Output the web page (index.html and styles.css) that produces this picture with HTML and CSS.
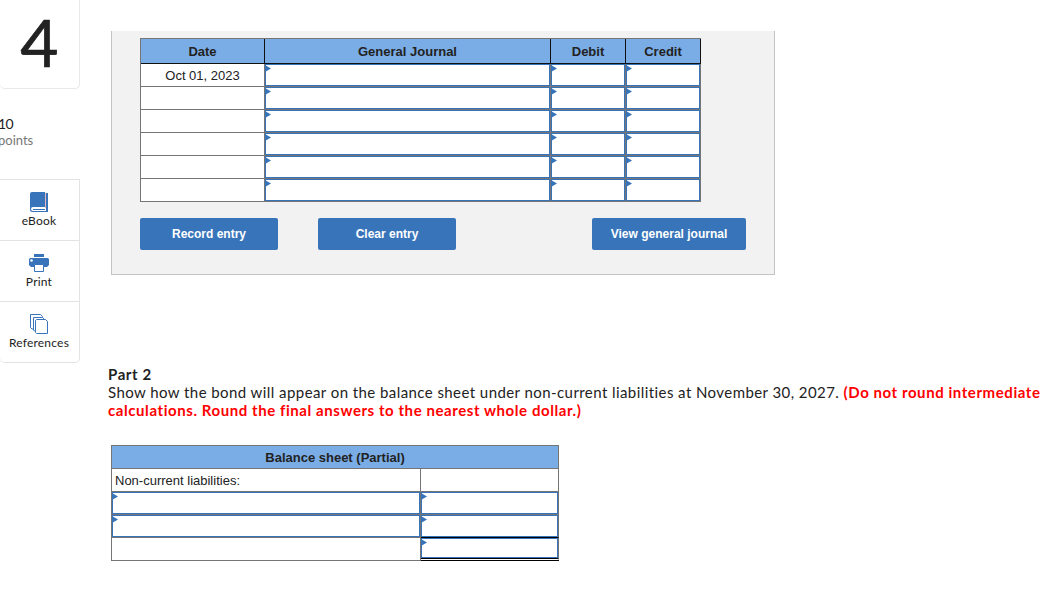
FILE: index.html
```html
<!DOCTYPE html>
<html lang="en">
<head>
    <meta charset="UTF-8">
    <meta name="viewport" content="width=device-width, initial-scale=1.0">
    <title>Question 4</title>
    <link rel="stylesheet" href="styles.css">
</head>
<body>
    <!-- Sidebar -->
    <aside class="sidebar">
        <div class="question-number">4</div>
        <div class="points">
            <div class="points-value">10</div>
            <div class="points-label">points</div>
        </div>
        <nav class="tools">
            <a class="tool">
                <svg width="20" height="20" viewBox="0 0 20 20">
                    <path d="M3 0H16v15H4a1.500 1.500 0 0 0 0 4H17V1h2v19H3.500A2.500 2.500 0 0 1 1 17.500V2Q1 0 3 0z" fill="#3874ba"/>
                    <path d="M4 17.500H16" stroke="#3874ba"/>
                    <path d="M16.500 1v15" stroke="#e3b9bd"/>
                </svg>
                <span>eBook</span>
            </a>
            <a class="tool">
                <svg width="20" height="20" viewBox="0 0 20 20">
                    <path d="M5 1h10v3H5zM1.500 5h17Q20 5 20 6.500V12l-2 2H2l-2-2V6.500Q0 5 1.500 5z" fill="#3874ba"/>
                    <circle cx="2.500" cy="7.500" r="1.300" fill="#fff"/>
                    <path d="M5.500 11.500h9v7h-9z" fill="#fff" stroke="#3874ba"/>
                </svg>
                <span>Print</span>
            </a>
            <a class="tool">
                <svg width="20" height="20" viewBox="0 0 20 20" fill="#fff" stroke="#3874ba">
                    <path d="M1.500.5h10l2 2v12.500H3l-1.500-1.500z"/>
                    <path d="M4.500 3.500h9l2 2v11.500H5.500l-1-1z"/>
                    <path d="M7.500 5.500h9l2 2v12H7.500l-1-1v-12z"/>
                </svg>
                <span>References</span>
            </a>
        </nav>
    </aside>

    <main class="content">
        <!-- General journal -->
        <section class="panel">
            <div class="sheet journal">
                <div class="head">Date</div>
                <div class="head">General Journal</div>
                <div class="head">Debit</div>
                <div class="head">Credit</div>

                <div class="cell date">Oct 01, 2023</div>
                <div class="cell entry"></div>
                <div class="cell entry"></div>
                <div class="cell entry"></div>

                <div class="cell"></div>
                <div class="cell entry"></div>
                <div class="cell entry"></div>
                <div class="cell entry"></div>

                <div class="cell"></div>
                <div class="cell entry"></div>
                <div class="cell entry"></div>
                <div class="cell entry"></div>

                <div class="cell"></div>
                <div class="cell entry"></div>
                <div class="cell entry"></div>
                <div class="cell entry"></div>

                <div class="cell"></div>
                <div class="cell entry"></div>
                <div class="cell entry"></div>
                <div class="cell entry"></div>

                <div class="cell"></div>
                <div class="cell entry"></div>
                <div class="cell entry"></div>
                <div class="cell entry"></div>
            </div>
            <div class="actions">
                <button class="btn">Record entry</button>
                <button class="btn">Clear entry</button>
                <button class="btn btn-view">View general journal</button>
            </div>
        </section>

        <!-- Part 2 -->
        <section class="part">
            <h2>Part 2</h2>
            <p>Show how the bond will appear on the balance sheet under non-current liabilities at November 30, 2027. <strong>(Do not round intermediate<br>calculations. Round the final answers to the nearest whole dollar.)</strong></p>
        </section>

        <div class="sheet balance">
            <div class="head">Balance sheet (Partial)</div>
            <div class="cell">Non-current liabilities:</div>
            <div class="cell"></div>
            <div class="cell entry"></div>
            <div class="cell entry"></div>
            <div class="cell entry"></div>
            <div class="cell entry subtotal"></div>
            <div class="cell"></div>
            <div class="cell entry total"></div>
        </div>
    </main>
</body>
</html>
```
FILE: styles.css
```css
* {
    box-sizing: border-box;
}

body {
    margin: 0;
    display: flex;
    height: 598px;
    overflow: hidden;
    background: #fff;
    color: #222;
    font-family: Lato, sans-serif;
}

/* Sidebar */
.sidebar {
    width: 80px;
    flex: none;
}

.question-number {
    height: 89px;
    border: 1px solid #e8e8e8;
    border-top: none;
    border-left: none;
    border-radius: 0 0 5px 5px;
    font-size: 66px;
    line-height: 83px;
    text-align: center;
    -webkit-text-stroke: 0.7px #222;
}

.points {
    height: 90px;
    padding-top: 27px;
    margin-left: -2px;
    line-height: 16px;
}

.points-value {
    font-size: 14px;
    letter-spacing: -0.6px;
}

.points-label {
    font-size: 13px;
    color: #777;
}

.tools {
    border: 1px solid #e3e3e3;
    border-left: none;
    border-radius: 0 0 5px 5px;
}

.tool {
    display: flex;
    flex-direction: column;
    align-items: center;
    height: 61px;
    padding: 12px 1px 0 0;
    border-bottom: 1px solid #e3e3e3;
    font-size: 12px;
    line-height: 16px;
    letter-spacing: 0.2px;
}

.tool span {
    margin-top: 1px;
}

.tool:last-child {
    height: 60px;
    border-bottom: none;
}

/* Journal panel */
.content {
    padding: 31px 0 0 31px;
    flex: none;
}

.panel {
    width: 664px;
    height: 244px;
    padding: 7px 28px 0;
    border: 1px solid #c3c3c3;
    border-top: none;
    background: #f2f2f2;
}

.sheet {
    display: grid;
    border: 1px solid #757575;
    border-right: none;
    border-bottom: none;
    font: 13px "Liberation Sans", Arial, sans-serif;
}

.head {
    border-bottom: 1px solid #757575;
    border-right: 1px solid #757575;
    background: #7aade6;
    font-weight: bold;
    line-height: 23px;
    text-align: center;
}

.cell {
    border-right: 1px solid #757575;
    border-bottom: 1px solid #757575;
    padding-left: 3px;
    background: #fff;
    line-height: 23px;
}

.entry {
    display: flex;
    padding: 1px 0 0;
    box-shadow: inset 0 0 0 1px #3874ba;
}

/* blue corner marker of an editable cell */
.entry::before {
    content: "";
    width: 6px;
    height: 7px;
    background: #3874ba;
    clip-path: polygon(0 0, 100% 50%, 0 100%);
}

.journal {
    width: 561px;
    grid-template-columns: 124px 286px 75px 75px;
    grid-template-rows: 25px repeat(6, 23px);
}

.journal .head {
    border-color: #111;
    line-height: 25px;
}

.date {
    padding: 0;
    text-align: center;
}

.actions {
    display: flex;
    gap: 40px;
    margin-top: 16px;
}

.btn {
    width: 138px;
    height: 32px;
    padding: 0;
    border: none;
    border-radius: 2px;
    background: #3874ba;
    color: #fff;
    font: bold 12px "Liberation Sans", Arial, sans-serif;
}

.btn-view {
    width: 154px;
    margin-left: 96px;
}

/* Part 2 */
.part {
    height: 170px;
    margin-left: -3px;
    padding-top: 90px;
    font-size: 15px;
    line-height: 18px;
    white-space: nowrap;
}

.part h2 {
    margin: 0;
    font-size: 15px;
    letter-spacing: 0.6px;
}

.part p {
    margin: 0;
    letter-spacing: 0.43px;
}

.part strong {
    color: #f00;
    letter-spacing: 0.57px;
}

.balance {
    width: 448px;
    grid-template-columns: 309px 138px;
    grid-template-rows: repeat(5, 23px);
}

.balance .head {
    grid-column: span 2;
}

.subtotal {
    border-bottom-color: #000;
}

.total {
    border-bottom: 3px double #000;
}
```
